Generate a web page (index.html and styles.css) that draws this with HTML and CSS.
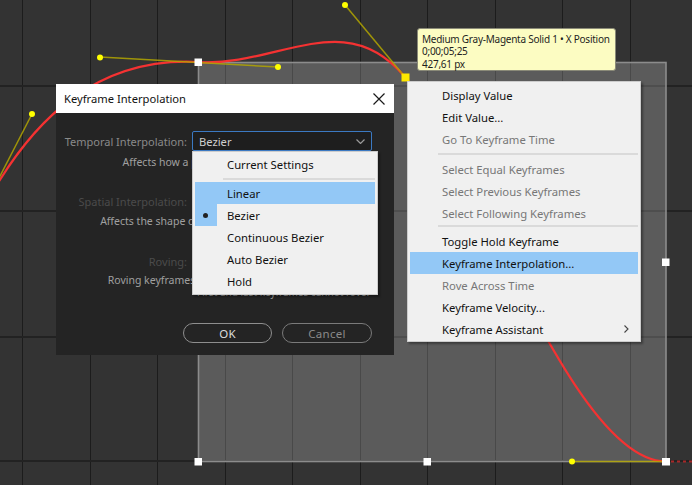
FILE: index.html
```html
<!DOCTYPE html>
<html>
<head>
<meta charset="utf-8">
<title>Keyframe Interpolation</title>
<link rel="stylesheet" href="styles.css">
</head>
<body>
<div class="stage">
  <svg class="graph" width="692" height="485" viewBox="0 0 692 485">
    <rect width="692" height="485" fill="#333333"/>
    <g stroke="#1c1c1c" stroke-width="1">
      <line x1="22.5" y1="0" x2="22.5" y2="485"/>
      <line x1="90.5" y1="0" x2="90.5" y2="485"/>
      <line x1="157.5" y1="0" x2="157.5" y2="485"/>
      <line x1="225.5" y1="0" x2="225.5" y2="485"/>
      <line x1="292.5" y1="0" x2="292.5" y2="485"/>
      <line x1="360.5" y1="0" x2="360.5" y2="485"/>
      <line x1="427.5" y1="0" x2="427.5" y2="485"/>
      <line x1="495.5" y1="0" x2="495.5" y2="485"/>
      <line x1="562.5" y1="0" x2="562.5" y2="485"/>
      <line x1="630.5" y1="0" x2="630.5" y2="485"/>
    </g>
    <g stroke="#222222" stroke-width="2">
      <line x1="0" y1="86" x2="692" y2="86"/>
      <line x1="0" y1="211" x2="692" y2="211"/>
      <line x1="0" y1="337" x2="692" y2="337"/>
      <line x1="0" y1="461" x2="692" y2="461"/>
    </g>
    <rect x="198.5" y="62.5" width="467.5" height="399" fill="rgba(255,255,255,0.2)" stroke="#8c8c8c" stroke-width="1.6"/>
    <path d="M -20 215 C 32 114, 100 57, 198 62 C 278 67, 345 5, 405 77 C 474 160, 572 461.5, 666 461.5" fill="none" stroke="#f53232" stroke-width="2.2"/>
    <line x1="671" y1="461.5" x2="692" y2="461.5" stroke="#a82828" stroke-width="2" stroke-dasharray="3 3"/>
    <g stroke="#b3a600" stroke-width="1.5" stroke-opacity="0.85">
      <line x1="-20" y1="215" x2="32" y2="114"/>
      <line x1="100" y1="57" x2="278" y2="67"/>
      <line x1="345" y1="5" x2="474" y2="160"/>
      <line x1="572" y1="461.5" x2="666" y2="461.5"/>
    </g>
    <g fill="#ffff00">
      <circle cx="32" cy="114" r="3"/>
      <circle cx="100" cy="57.5" r="3"/>
      <circle cx="278" cy="67" r="3"/>
      <circle cx="345" cy="5" r="3"/>
      <circle cx="572" cy="461.5" r="3"/>
    </g>
    <g fill="#ffffff">
      <rect x="194.5" y="58.5" width="7.5" height="7.5"/>
      <rect x="194.5" y="458" width="7.5" height="7.5"/>
      <rect x="423.5" y="458" width="7.5" height="7.5"/>
      <rect x="662" y="458" width="8" height="7.5"/>
      <rect x="662" y="258.5" width="7.5" height="7.5"/>
    </g>
    <rect x="401.5" y="73.5" width="8" height="8" fill="#ffe800"/>
  </svg>

  <div class="tooltip">
    <div>Medium Gray-Magenta Solid 1 • X Position</div>
    <div>0;00;05;25</div>
    <div>427,61 px</div>
  </div>

  <div class="dialog">
    <div class="dlg-title">
      <span>Keyframe Interpolation</span>
      <svg class="close" width="12" height="12" viewBox="0 0 12 12"><path d="M0.5 0.5 L11.5 11.5 M11.5 0.5 L0.5 11.5" stroke="#1a1a1a" stroke-width="1.2" fill="none"/></svg>
    </div>
    <div class="dlg-body">
      <div class="field f1">
        <span class="label">Temporal Interpolation:</span>
        <div class="select">
          <span>Bezier</span>
          <svg class="chev" width="9" height="5" viewBox="0 0 9 5"><path d="M0.5 0.5 L4.5 4.5 L8.5 0.5" stroke="#9a9a9a" stroke-width="1.2" fill="none"/></svg>
        </div>
      </div>
      <p class="desc d1">Affects how a property changes over time</p>
      <div class="field f2">
        <span class="label dim">Spatial Interpolation:</span>
        <div class="select disabled"><span>Bezier</span></div>
      </div>
      <p class="desc d2">Affects the shape of the path in Composition panel</p>
      <div class="field f3">
        <span class="label dim">Roving:</span>
        <span class="dimtext">Lock To Time</span>
      </div>
      <p class="desc d3">Roving keyframes rove in time to smooth speed</p>
      <p class="desc d3b">First and last keyframes cannot rove.</p>
      <div class="buttons">
        <button class="btn ok">OK</button>
        <button class="btn cancel">Cancel</button>
      </div>
    </div>
  </div>

  <div class="dropdown">
    <div class="item">Current Settings</div>
    <div class="sep"></div>
    <div class="item hl">Linear</div>
    <div class="item checked"><span class="bullet"></span>Bezier</div>
    <div class="item">Continuous Bezier</div>
    <div class="item">Auto Bezier</div>
    <div class="item">Hold</div>
  </div>

  <div class="ctxmenu">
    <div class="item">Display Value</div>
    <div class="item">Edit Value...</div>
    <div class="item off">Go To Keyframe Time</div>
    <div class="sep"></div>
    <div class="item off">Select Equal Keyframes</div>
    <div class="item off">Select Previous Keyframes</div>
    <div class="item off">Select Following Keyframes</div>
    <div class="sep s2"></div>
    <div class="item">Toggle Hold Keyframe</div>
    <div class="item hl">Keyframe Interpolation...</div>
    <div class="item off">Rove Across Time</div>
    <div class="item">Keyframe Velocity...</div>
    <div class="item sub">Keyframe Assistant
      <svg class="arrow" width="5" height="8" viewBox="0 0 5 8"><path d="M0.5 0.5 L4 4 L0.5 7.5" stroke="#444" stroke-width="1.1" fill="none"/></svg>
    </div>
  </div>
</div>
</body>
</html>
```

FILE: styles.css
```css
* { box-sizing: border-box; }
html, body { margin: 0; padding: 0; background: #333; }
body { font-family: "Noto Sans", "Open Sans", sans-serif; }

.stage {
  position: relative;
  width: 692px;
  height: 485px;
  overflow: hidden;
}
.graph { position: absolute; left: 0; top: 0; display: block; }

/* tooltip */
.tooltip {
  position: absolute;
  left: 417px;
  top: 28px;
  width: 199px;
  height: 43px;
  background: #fcfcc2;
  border: 1px solid #8a8a78;
  border-radius: 3px;
  padding: 4px 0 0 4px;
  font-size: 10px;
  letter-spacing: -0.25px;
  line-height: 12.4px;
  color: #1e1e1e;
  white-space: nowrap;
}

/* dialog */
.dialog {
  position: absolute;
  left: 56px;
  top: 84px;
  width: 338px;
  height: 271px;
  background: #242424;
  display: flex;
  flex-direction: column;
}
.dlg-title {
  height: 29px;
  background: #ffffff;
  display: flex;
  align-items: center;
  justify-content: space-between;
  padding: 0 9px 0 8px;
  font-size: 11.2px;
  color: #111;
}
.close { display: block; }
.dlg-body {
  flex: 1;
  display: flex;
  flex-direction: column;
  overflow: hidden;
}
.field {
  display: grid;
  grid-template-columns: 131px 180px;
  column-gap: 5px;
  align-items: center;
  height: 20px;
}
.f1 { margin-top: 18px; }
.f2 { margin-top: 22px; }
.f3 { margin-top: 23px; }
.label {
  display: flex;
  justify-content: flex-end;
  white-space: nowrap;
  font-size: 11px;
  color: #8a8a8a;
}
.label.dim { color: #4b4b4b; }
.select {
  height: 20px;
  border: 1px solid #3b79c2;
  border-radius: 2px;
  background: #1e1e1e;
  display: flex;
  align-items: center;
  justify-content: space-between;
  padding: 0 6px 0 6px;
  font-size: 11.2px;
  color: #cfcfcf;
}
.select.disabled { border-color: #3a3a3a; color: #555; }
.chev { display: block; }
.dimtext { font-size: 11px; color: #555; padding-left: 20px; white-space: nowrap; }
.desc {
  margin: 0;
  text-align: center;
  font-size: 10.5px;
  line-height: 14px;
  color: #a0a0a0;
  white-space: nowrap;
}
.d1 { margin-top: 4px; }
.d2 { margin-top: 3px; }
.d3 { margin-top: 3px; line-height: 12px; }
.d3b { text-align: left; padding-left: 141px; line-height: 13px; font-size: 10px; }
.buttons {
  display: flex;
  justify-content: flex-end;
  gap: 10px;
  padding-right: 22px;
  margin-top: 24px;
}
.btn {
  height: 20px;
  border-radius: 10px;
  background: transparent;
  border: 1.5px solid #8e8e8e;
  font-family: inherit;
  font-size: 11.5px;
  padding: 0;
  letter-spacing: 0.3px;
}
.btn.ok { width: 89px; color: #dcdcdc; }
.btn.cancel { width: 90px; color: #8a8a8a; border-color: #7a7a7a; }

/* shared menu styles */
.dropdown, .ctxmenu {
  position: absolute;
  background: #f0f0f0;
  border: 1px solid #cccccc;
  box-shadow: 2px 2px 2px rgba(0, 0, 0, 0.35);
  font-size: 11.3px;
  color: #111;
}
.item {
  height: 22px;
  display: flex;
  align-items: center;
  margin: 0 2px;
  padding-left: 32px;
  position: relative;
  white-space: nowrap;
}
.item.hl { background: #93c8f6; }
.sep {
  height: 7px;
  position: relative;
}
.sep::after {
  content: "";
  position: absolute;
  left: 30px;
  right: 2px;
  top: 3px;
  height: 2px;
  background: #dadada;
}

.dropdown {
  left: 192px;
  top: 151px;
  width: 186px;
  height: 144px;
  padding-top: 1px;
}
.item.checked::before {
  content: "";
  position: absolute;
  left: 0;
  top: 0;
  width: 22px;
  height: 22px;
  background: #93c8f6;
}
.bullet {
  position: absolute;
  left: 8px;
  top: 9px;
  width: 5px;
  height: 5px;
  border-radius: 50%;
  background: #222;
  z-index: 1;
}

.ctxmenu {
  left: 407px;
  top: 81px;
  width: 234px;
  height: 261px;
  padding-top: 2px;
}
.ctxmenu .item.off { color: #777; }
.ctxmenu .sep { height: 8px; }
.ctxmenu .sep::after { top: 3px; }
.ctxmenu .sep.s2 { height: 6px; }
.ctxmenu .sep.s2::after { top: 1px; }
.arrow { position: absolute; right: 9px; top: 7px; }
```
